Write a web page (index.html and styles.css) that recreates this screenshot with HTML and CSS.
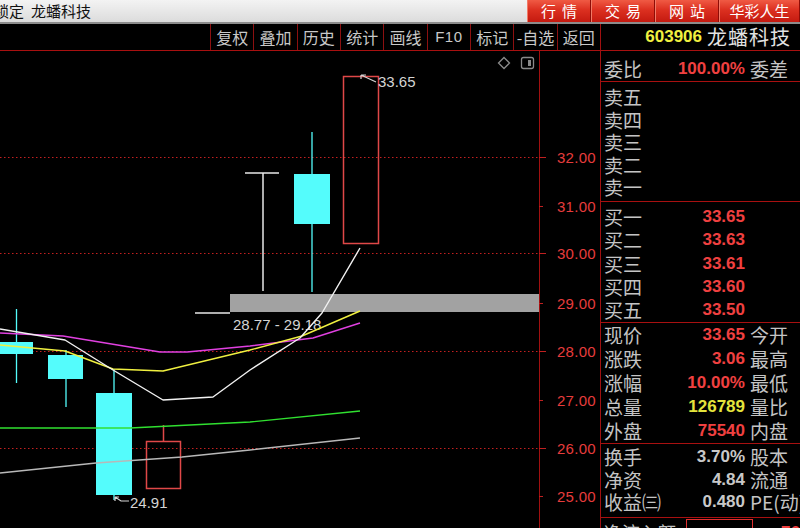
FILE: index.html
```html
<!DOCTYPE html>
<html lang="zh">
<head>
<meta charset="utf-8">
<title>龙蟠科技</title>
<link rel="stylesheet" href="styles.css">
</head>
<body>
<div class="app">
  <header class="titlebar">
    <div class="title"><span class="lock">锁定</span><span class="tname">龙蟠科技</span></div>
    <nav class="tabs">
      <span class="tab">行情</span>
      <span class="tab">交易</span>
      <span class="tab">网站</span>
      <span class="tab wide">华彩人生</span>
    </nav>
  </header>
  <div class="main">
    <section class="left">
      <div class="toolbar">
        <span class="btn">复权</span>
        <span class="btn">叠加</span>
        <span class="btn">历史</span>
        <span class="btn">统计</span>
        <span class="btn">画线</span>
        <span class="btn latin">F10</span>
        <span class="btn">标记</span>
        <span class="btn">-自选</span>
        <span class="btn">返回</span>
      </div>
      <div class="chart">
        <svg class="plot" width="600" height="477" viewBox="0 51 600 477" xmlns="http://www.w3.org/2000/svg">
          <g class="gridline">
            <line x1="0" y1="157.5" x2="539" y2="157.5"/>
            <line x1="0" y1="253.5" x2="539" y2="253.5"/>
            <line x1="0" y1="351.5" x2="539" y2="351.5"/>
            <line x1="0" y1="448.5" x2="539" y2="448.5"/>
          </g>
          <line class="axis" x1="539.5" y1="51" x2="539.5" y2="528"/>
          <g class="tick">
            <line x1="539" y1="157.5" x2="546" y2="157.5"/>
            <line x1="539" y1="206.5" x2="543" y2="206.5"/>
            <line x1="539" y1="253.5" x2="546" y2="253.5"/>
            <line x1="539" y1="303.5" x2="543" y2="303.5"/>
            <line x1="539" y1="351.5" x2="546" y2="351.5"/>
            <line x1="539" y1="400.5" x2="543" y2="400.5"/>
            <line x1="539" y1="448.5" x2="546" y2="448.5"/>
            <line x1="539" y1="496.5" x2="543" y2="496.5"/>
          </g>
          <g class="axlbl">
            <text x="596" y="163">32.00</text>
            <text x="596" y="212">31.00</text>
            <text x="596" y="259">30.00</text>
            <text x="596" y="309">29.00</text>
            <text x="596" y="357">28.00</text>
            <text x="596" y="406">27.00</text>
            <text x="596" y="454">26.00</text>
            <text x="596" y="502">25.00</text>
          </g>

          <rect class="band" x="230" y="294" width="309" height="18"/>
          <text class="note" x="233" y="330">28.77 - 29.18</text>

          <!-- candles -->
          <line class="wick-d" x1="16.5" y1="309" x2="16.5" y2="383"/>
          <rect class="down" x="0" y="342" width="33" height="12"/>
          <line class="wick-d" x1="66" y1="350" x2="66" y2="407"/>
          <rect class="down" x="48" y="355" width="35" height="24"/>
          <line class="wick-d" x1="114" y1="369" x2="114" y2="500"/>
          <rect class="down" x="96" y="393" width="36" height="102"/>
          <line class="up" x1="163.5" y1="425" x2="163.5" y2="441"/>
          <rect class="up" x="146.5" y="441.5" width="34" height="47"/>
          <line class="flat" x1="195" y1="313" x2="230" y2="313"/>
          <line class="flat" x1="245" y1="173" x2="279" y2="173"/>
          <line class="flat" x1="263" y1="173" x2="263" y2="291"/>
          <line class="wick-d" x1="312" y1="132" x2="312" y2="292"/>
          <rect class="down" x="294" y="174" width="36" height="50"/>
          <rect class="up" x="343.5" y="76.5" width="35" height="167"/>

          <!-- moving averages -->
          <polyline class="ma ma60" points="0,473 96,463 182,457 250,450 360,438"/>
          <polyline class="ma ma30" points="0,428 130,428 250,422 360,411"/>
          <polyline class="ma ma10" points="0,333 63,336 160,352 187,352 250,346 313,338 360,323"/>
          <polyline class="ma ma20" points="0,345 65,351 113,369 163,371 250,350 302,336 360,311"/>
          <polyline class="ma ma5" points="0,329 65,340 113,370 163,400 213,397 250,370 300,338 322,313 360,248"/>

          <!-- annotations -->
          <path class="arrow" d="M361,75 L376,82 M361,75 h5 M361,75 v4"/>
          <text class="note" x="378" y="87">33.65</text>
          <path class="arrow" d="M115,497 L121,501 H129 M115,497 h4 M115,497 v4"/>
          <text class="note" x="130" y="508">24.91</text>

          <!-- corner icons -->
          <path class="ico" d="M504,57.5 L509.5,63 L504,68.5 L498.5,63 Z"/>
          <rect class="ico" x="521.5" y="57.5" width="12" height="11" rx="2"/>
          <rect class="ico-fill" x="528" y="60" width="3" height="6"/>
        </svg>
      </div>
    </section>

    <aside class="panel">
      <div class="phead"><span class="code">603906</span><span class="name">龙蟠科技</span></div>

      <div class="blk blk-wb">
        <div class="row"><span class="lbl">委比</span><span class="val red">100.00%</span><span class="lbl2">委差</span></div>
      </div>

      <div class="blk blk-sell">
        <div class="row r-s"><span class="lbl">卖五</span><span class="val"></span><span class="lbl2"></span></div>
        <div class="row r-s"><span class="lbl">卖四</span><span class="val"></span><span class="lbl2"></span></div>
        <div class="row r-s"><span class="lbl">卖三</span><span class="val"></span><span class="lbl2"></span></div>
        <div class="row r-s"><span class="lbl">卖二</span><span class="val"></span><span class="lbl2"></span></div>
        <div class="row r-s"><span class="lbl">卖一</span><span class="val"></span><span class="lbl2"></span></div>
      </div>

      <div class="blk blk-buy">
        <div class="row r-b"><span class="lbl">买一</span><span class="val red">33.65</span><span class="lbl2"></span></div>
        <div class="row r-b"><span class="lbl">买二</span><span class="val red">33.63</span><span class="lbl2"></span></div>
        <div class="row r-b"><span class="lbl">买三</span><span class="val red">33.61</span><span class="lbl2"></span></div>
        <div class="row r-b"><span class="lbl">买四</span><span class="val red">33.60</span><span class="lbl2"></span></div>
        <div class="row r-b"><span class="lbl">买五</span><span class="val red">33.50</span><span class="lbl2"></span></div>
      </div>

      <div class="blk blk-quote">
        <div class="row r-q"><span class="lbl">现价</span><span class="val red">33.65</span><span class="lbl2">今开</span></div>
        <div class="row r-q"><span class="lbl">涨跌</span><span class="val red">3.06</span><span class="lbl2">最高</span></div>
        <div class="row r-q"><span class="lbl">涨幅</span><span class="val red">10.00%</span><span class="lbl2">最低</span></div>
        <div class="row r-q"><span class="lbl">总量</span><span class="val yellow">126789</span><span class="lbl2">量比</span></div>
        <div class="row r-q"><span class="lbl">外盘</span><span class="val red">75540</span><span class="lbl2">内盘</span></div>
      </div>

      <div class="blk blk-fin">
        <div class="row r-f"><span class="lbl">换手</span><span class="val">3.70%</span><span class="lbl2">股本</span></div>
        <div class="row r-f"><span class="lbl">净资</span><span class="val">4.84</span><span class="lbl2">流通</span></div>
        <div class="row r-f"><span class="lbl">收益㈢</span><span class="val">0.480</span><span class="lbl2">PE(动)</span></div>
      </div>

      <div class="lastrow">
        <span class="lbl">净流入额</span><span class="flowbox"></span><span class="flowval">76</span>
      </div>
    </aside>
  </div>
</div>
</body>
</html>
```

FILE: styles.css
```css
* { box-sizing: border-box; margin: 0; padding: 0; }
html, body { width: 800px; height: 528px; overflow: hidden; background: #000; }
body { font-family: "Liberation Sans", "Noto Sans CJK SC", sans-serif; color: #c8c8c8; }

.app { width: 800px; height: 528px; display: flex; flex-direction: column; }

/* title bar */
.titlebar {
  height: 24px; flex: 0 0 24px; display: flex;
  background: linear-gradient(#f3f3f3, #dcdcdc);
  border-bottom: 2px solid #8c8c8c;
}
.title {
  flex: 1; margin-left: -6px; white-space: nowrap; overflow: hidden; display: flex; gap: 7px;
  font-family: "Noto Sans CJK SC", sans-serif; font-size: 15px; line-height: 21px; color: #111;
}
.tabs { display: flex; height: 22px; }
.tab {
  width: 64px; height: 22px; text-align: center;
  font-family: "Noto Sans CJK SC", sans-serif; font-size: 15px; line-height: 22px;
  color: #fff; letter-spacing: 6px; text-indent: 6px;
  background: linear-gradient(#f05a44 0%, #dc3020 45%, #c41a10 100%);
  border-left: 1px solid #f27a66; border-right: 1px solid #8e0c06;
}
.tab.wide { width: 81px; letter-spacing: 0; text-indent: 0; }

/* main */
.main { flex: 1; display: flex; min-height: 0; }
.left { width: 600px; flex: 0 0 600px; display: flex; flex-direction: column; }
.toolbar {
  height: 27px; flex: 0 0 27px; display: flex; justify-content: flex-end;
  border-bottom: 1px solid #a81010;
}
.btn {
  width: 43.33px; border-left: 1px solid #8c1010; text-align: center;
  font-family: "Noto Sans CJK SC", sans-serif; font-size: 16px; line-height: 26px; color: #c8c8c8;
  white-space: nowrap;
}
.btn.latin { font-family: "Liberation Sans", sans-serif; font-size: 15px; letter-spacing: 0.5px; }
.chart { flex: 1; overflow: hidden; }
.plot { display: block; }

/* svg chart */
.gridline line { stroke: #c42020; stroke-width: 1; stroke-dasharray: 1.5 2.5; }
.axis { stroke: #a01010; stroke-width: 1; }
.tick line { stroke: #c02020; stroke-width: 1; }
.axlbl text { fill: #e63c3c; font-family: "Liberation Sans", sans-serif; font-size: 15px; text-anchor: end; letter-spacing: 0.3px; }
.band { fill: #a2a2a2; }
.down { fill: #54fcfc; }
.wick-d { stroke: #54fcfc; stroke-width: 1.3; }
.up { fill: none; stroke: #e04848; stroke-width: 1.5; }
.flat { stroke: #e8e8e8; stroke-width: 1.5; }
.ma { fill: none; stroke-width: 1.4; stroke-linejoin: round; }
.ma5 { stroke: #f2f2f2; }
.ma10 { stroke: #e040e0; }
.ma20 { stroke: #f0f040; }
.ma30 { stroke: #30e030; }
.ma60 { stroke: #b8b8b8; }
.note { fill: #d4d4d4; font-family: "Liberation Sans", sans-serif; font-size: 15px; }
.arrow { fill: none; stroke: #d4d4d4; stroke-width: 1.2; }
.ico { fill: none; stroke: #8a8a8a; stroke-width: 1.3; }
.ico-fill { fill: #8a8a8a; }

/* right panel */
.panel {
  width: 200px; flex: 0 0 200px; border-left: 1px solid #a01010; overflow: hidden;
  font-family: "Noto Sans CJK SC", sans-serif; color: #c4c4c4;
}
.phead {
  height: 27px; display: flex; align-items: center; justify-content: flex-end;
  gap: 5px; padding-right: 9px; border-bottom: 1px solid #a81010; white-space: nowrap;
}
.code { font-family: "Liberation Sans", sans-serif; font-weight: bold; font-size: 17px; color: #f0f040; }
.name { font-size: 20px; letter-spacing: 1px; color: #e2e2e2; line-height: 26px; }

.blk { border-bottom: 1px solid #a81010; }
.blk-wb { height: 31px; padding-top: 6px; }
.blk-sell { height: 120px; padding-top: 4px; }
.blk-buy { height: 121px; padding-top: 3px; }
.blk-quote { height: 121px; }
.blk-fin { height: 74px; padding-top: 2px; }

.row {
  display: grid; grid-template-columns: 50px 91px 1fr; padding-left: 3px;
  white-space: nowrap; height: 24px; line-height: 24px; align-items: center;
}
.r-s { height: 22.6px; line-height: 22.6px; }
.r-b { height: 23.3px; line-height: 23.3px; }
.r-q { height: 24px; line-height: 24px; }
.r-f { height: 22.5px; line-height: 22.5px; }
.lbl { font-size: 19px; overflow: visible; }
.lbl2 { font-size: 19px; padding-left: 5px; overflow: hidden; }
.val {
  font-family: "Liberation Sans", sans-serif; font-weight: bold; font-size: 17px;
  text-align: right; color: #c8c8c8;
}
.val.red { color: #f04040; }
.val.yellow { color: #e4e43c; }

.lastrow {
  display: flex; align-items: flex-start; padding-left: 3px; white-space: nowrap; height: 24px;
}
.lastrow .lbl { font-size: 18px; line-height: 24px; margin-top: 2px; }
.flowbox { width: 68px; height: 20px; border: 1px solid #e03030; margin-left: 10px; margin-top: 1px; }
.flowval {
  margin-left: 28px; font-family: "Liberation Sans", sans-serif; font-weight: bold; font-size: 17px;
  color: #f04040; line-height: 24px; margin-top: 3px;
}
```
